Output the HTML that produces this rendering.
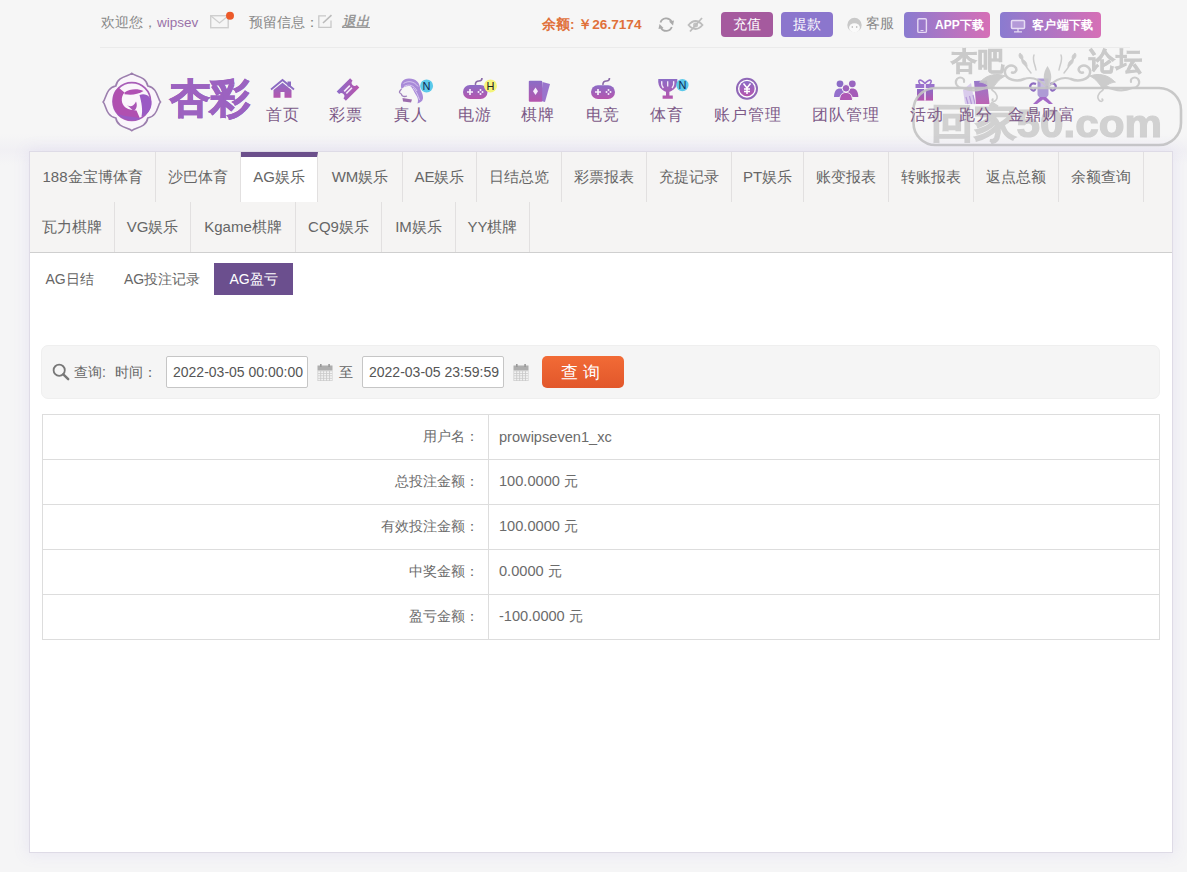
<!DOCTYPE html>
<html><head><meta charset="utf-8">
<style>
*{margin:0;padding:0;box-sizing:border-box}
html,body{width:1187px;height:872px;overflow:hidden}
body{font-family:"Liberation Sans",sans-serif;background:#f5f5f6;position:relative;color:#666}
.abs{position:absolute}
#hdr{position:absolute;left:0;top:0;width:1187px;height:165px;background:linear-gradient(#f6f6f6 0,#f6f6f6 134px,#f1f0f4 150px,#f5f5f6 165px)}
#topline{position:absolute;left:100px;top:47px;width:1030px;height:1px;background:#ebebeb}
.t13{font-size:13.5px;line-height:16px;white-space:nowrap}
.btn{position:absolute;top:12px;height:25px;border-radius:4px;color:#fff;font-size:14px;line-height:25px;text-align:center}
.nav{position:absolute;top:104px;font-size:16px;letter-spacing:1px;line-height:22px;color:#7d5a88;white-space:nowrap}
#box{position:absolute;left:29px;top:151px;width:1144px;height:702px;background:#fff;border:1px solid #dedbe6;box-shadow:0 0 14px 2px rgba(140,115,215,.10)}
#tabs{position:absolute;left:0;top:0;width:1142px;height:101px;background:#f5f4f3;border-bottom:1px solid #cfcfcf}
.tab{position:absolute;height:50px;line-height:50px;font-size:15px;color:#666;border-right:1px solid #e2e0e0;text-align:center;white-space:nowrap}
.sub{position:absolute;top:111px;height:32px;line-height:32px;font-size:14px;color:#666;text-align:center;white-space:nowrap}
.inp{width:142px;height:32px;border:1px solid #c6c6c6;border-radius:2px;background:#fff;font-size:14px;line-height:30px;padding-left:6px;color:#555;white-space:nowrap}
.cal{width:15px;height:17px;background:repeating-linear-gradient(90deg,#ccc 0 2px,#eee 2px 3px);border-top:4px solid #bbb}
#tbl{position:absolute;left:42px;top:414px;width:1118px;border-collapse:collapse;font-size:14px;color:#6b6b6b}
#tbl td{height:45px;border:1px solid #ddd;padding:0}
#tbl td.l{width:446px;text-align:right;padding-right:9px}
#tbl td.r{padding-left:10px}
#tbl .lt{font-size:14.6px}
</style></head><body>
<div id="hdr"></div>
<div id="topline"></div>
<!-- top bar -->
<div class="abs t13" style="left:101px;top:15px;color:#888">欢迎您，<span style="color:#9a72a8">wipsev</span></div>
<div class="abs t13" style="left:249px;top:15px;color:#888">预留信息：</div>
<div class="abs t13" style="left:342px;top:14px;color:#999;font-style:italic;text-decoration:underline;font-weight:bold">退出</div>
<div class="abs" style="left:542px;top:16px;font-size:13.6px;line-height:18px;font-weight:bold;color:#e0703a;white-space:nowrap">余额: ￥26.7174</div>
<div class="btn" style="left:721px;width:52px;background:#a55a9e">充值</div>
<div class="btn" style="left:781px;width:52px;background:#8b76cd">提款</div>
<div class="abs t13" style="left:866px;top:15px;color:#888;font-size:14px">客服</div>
<div class="btn" style="left:904px;width:86px;height:26px;background:linear-gradient(90deg,#8a7bd0,#d66fb6)"></div>
<div class="btn" style="left:1000px;width:101px;height:26px;background:linear-gradient(90deg,#8a7bd0,#d66fb6)"></div>


<!-- header icons svg -->
<svg class="abs" style="left:0;top:0" width="1187" height="150" viewBox="0 0 1187 150">
<defs>
<linearGradient id="pg" x1="0" y1="0" x2="0" y2="1"><stop offset="0" stop-color="#8b6cc6"/><stop offset="1" stop-color="#b655ad"/></linearGradient>
<linearGradient id="pgd" x1="0" y1="0" x2="1" y2="1"><stop offset="0" stop-color="#8c6cc8"/><stop offset="1" stop-color="#b854ac"/></linearGradient>
<linearGradient id="lg" x1="0" y1="0" x2="1" y2="0"><stop offset="0" stop-color="#b550b0"/><stop offset="1" stop-color="#8a66c6"/></linearGradient>
</defs>
<!-- mail -->
<rect x="210.7" y="15.7" width="17.5" height="12" fill="none" stroke="#cfcfcf" stroke-width="1.4"/>
<path d="M211 16 L219.5 23 L228 16" fill="none" stroke="#cfcfcf" stroke-width="1.3"/>
<circle cx="230" cy="15.8" r="4" fill="#ec5a2a"/>
<!-- edit -->
<path d="M326 15.8 H318.8 V27.3 H331 V20.5" fill="none" stroke="#c8c8c8" stroke-width="1.3"/>
<path d="M323 23 L331.5 15.2" stroke="#bbb" stroke-width="1.6"/>
<!-- refresh -->
<path d="M660.5 22.5 A6 6 0 0 1 671.5 21.5" fill="none" stroke="#aaa" stroke-width="1.8"/>
<path d="M671.8 27 A6 6 0 0 1 661 28" fill="none" stroke="#aaa" stroke-width="1.8"/>
<path d="M669 21.5 L674 20.5 L673 25.5 Z" fill="#aaa"/>
<path d="M663.5 28 L658.5 29 L659.5 24 Z" fill="#aaa"/>
<!-- eye slash -->
<path d="M688.5 25 Q695.5 17 702.5 25 Q695.5 33 688.5 25 Z" fill="none" stroke="#bdbdbd" stroke-width="1.8"/>
<circle cx="695.5" cy="25" r="2.5" fill="#c4c4c4"/>
<path d="M690 31.5 L702 18" stroke="#bdbdbd" stroke-width="1.8"/>
<!-- kefu face -->
<circle cx="854.5" cy="25" r="7.2" fill="#c9c9c9"/>
<ellipse cx="854.5" cy="27.8" rx="5.4" ry="4.6" fill="#fafafa"/>
<circle cx="852.3" cy="27" r=".8" fill="#aaa"/><circle cx="856.7" cy="27" r=".8" fill="#aaa"/>
<!-- phone icon in app button -->
<rect x="917.8" y="18.8" width="8.6" height="13.6" rx="1.2" fill="none" stroke="#e6d9f3" stroke-width="1.4"/><rect x="920.5" y="30" width="3" height="1" fill="#e6d9f3"/>
<!-- monitor icon -->
<rect x="1011.5" y="20.5" width="13" height="8" rx="1" fill="#b49ad8" stroke="#e6dcf3" stroke-width="1.5"/>
<path d="M1018 28.5 V31.5 M1014 31.8 H1022" stroke="#e6dcf3" stroke-width="1.3"/>

<!-- logo emblem -->
<path d="M131.8 73.3 C135.0 76.5 146.0 76.0 147.8 86.0 C157.8 87.8 157.3 98.8 160.5 102.0 C157.3 105.2 157.8 116.2 147.8 118.0 C146.0 128.0 135.0 127.5 131.8 130.7 C128.6 127.5 117.6 128.0 115.8 118.0 C105.8 116.2 106.3 105.2 103.1 102.0 C106.3 98.8 105.8 87.8 115.8 86.0 C117.6 76.0 128.6 76.5 131.8 73.3 Z" fill="#faf5fb" stroke="#9c7fae" stroke-width="1.6"/>
<circle cx="131.8" cy="101.5" r="18.8" fill="none" stroke="#a85db8" stroke-width="1.7"/>
<path d="M112.8 101.5 A19 19 0 0 0 140 118.5 L136.5 110.5 C133 110 129 110 125.5 107.5 C121 104 120.5 97 124.5 92.5 L118.5 87.5 A19 19 0 0 0 112.8 101.5 Z" fill="#b050b0"/>
<path d="M127 105 C130.5 107.5 134 106 136 101.5 C137.5 105 137 109 133.5 111 Z" fill="#a955b6"/>
<path d="M124.5 92.5 C130 88.5 138 88.5 143.5 91 C137.5 94.8 131 95.2 124.5 94.2 Z" fill="#b050b4"/>
<path d="M139.5 95 C146 92.5 152 97 151.5 104 C151 110 147.5 114.5 141.5 116.5 C143 110 141.5 102 139.5 95 Z" fill="#9a5ac4"/>
<path d="M117 113.5 C124 117 133 116 141 118.5 C134 121.8 123 120.5 117 113.5 Z" fill="#9a5ac4"/>
<!-- nav icons -->
<!-- home -->
<path d="M271 89.5 L282.5 80 L294 89.5" fill="none" stroke="#8b6ac2" stroke-width="1.8"/>
<rect x="287.5" y="81.5" width="3.5" height="5" fill="#8b6ac2"/>
<path d="M273.5 90 L282.5 82.7 L291.5 90 V97.8 H284.5 V92 H280.5 V97.8 H273.5 Z" fill="url(#pg)"/>
<!-- ticket -->
<g transform="rotate(-45 348 89.5)"><path d="M338.5 83 H357.5 V86.5 A3 3 0 0 0 357.5 92.5 V96 H338.5 V92.5 A3 3 0 0 0 338.5 86.5 Z" fill="url(#pgd)"/>
<rect x="344" y="87.3" width="8" height="1.6" fill="#f4eefa"/><rect x="344" y="90.3" width="8" height="1.6" fill="#f4eefa"/></g>
<!-- woman -->
<path d="M401.5 89 C399.5 83 403 78.5 409 78.5 C416 78.5 419.5 82.5 420 87.5 C420.5 91.5 423.5 94 423 98.5 C422.5 101.5 420 102.5 417.5 103.5 C418.5 100 418 97.5 416 95 C414 92 413 89 411 86.5 C408 85.5 404 86.5 401.5 89 Z" fill="#a88ad8"/>
<path d="M403.5 83.5 C408 80.5 414 81 418 86.5 M404 86.5 C409 83.5 414 85.5 417 91 M413 88 C416 91 418 95 419.5 100" fill="none" stroke="#dccdf2" stroke-width=".9"/>
<path d="M401.5 89 C400.5 90.5 399 91 399.5 92.5 C400 93.5 401 93 401.5 94.5 C402 96.5 404.5 97 407 96" fill="none" stroke="#9f80bc" stroke-width="1.3"/>
<path d="M402.5 98 L412 99.5 L411 102.5 L403 101.5 Z" fill="#9c6cac"/>
<circle cx="426.6" cy="85.9" r="6.5" fill="#5cc9ea"/>
<text x="426.6" y="89.9" font-family="Liberation Sans" font-size="11" fill="#0e2a55" text-anchor="middle">N</text>
<!-- gamepad 1 -->
<path d="M475.5 85 C475 82 477 81 479 81 C481 81 482 80 482 78" fill="none" stroke="#8a6aa8" stroke-width="1.6"/>
<rect x="463" y="85" width="24.5" height="14" rx="7" fill="url(#pg)"/>
<path d="M467 92 H473 M470 89 V95" stroke="#f5eefa" stroke-width="1.7"/>
<circle cx="480.5" cy="90" r="1" fill="#f5eefa"/><circle cx="480.5" cy="94" r="1" fill="#f5eefa"/><circle cx="478.5" cy="92" r="1" fill="#f5eefa"/><circle cx="482.5" cy="92" r="1" fill="#f5eefa"/>
<circle cx="490.5" cy="85.9" r="6.5" fill="#f4f47a"/>
<text x="490.5" y="89.9" font-family="Liberation Sans" font-size="11" fill="#222" text-anchor="middle">H</text>
<!-- cards -->
<path d="M542.5 82 L550 84 L545 102 L541 101 Z" fill="#9a74cc"/>
<rect x="528.8" y="80.8" width="13.4" height="21" rx="1" fill="url(#pg)"/>
<path d="M535.5 87.5 L538 91.3 L535.5 95 L533 91.3 Z" fill="#f6eefb"/>
<!-- gamepad 2 -->
<path d="M603 85 C602.5 82 604.5 81 606.5 81 C608.5 81 609.5 80 609.5 78" fill="none" stroke="#8a6aa8" stroke-width="1.6"/>
<rect x="591" y="85.2" width="24" height="13.8" rx="6.9" fill="url(#pg)"/>
<path d="M595 92 H601 M598 89 V95" stroke="#f5eefa" stroke-width="1.7"/>
<circle cx="608.5" cy="90" r="1" fill="#f5eefa"/><circle cx="608.5" cy="94" r="1" fill="#f5eefa"/><circle cx="606.5" cy="92" r="1" fill="#f5eefa"/><circle cx="610.5" cy="92" r="1" fill="#f5eefa"/>
<!-- trophy -->
<path d="M658.3 79 H677.3 C677.8 83 676.8 87 673.6 89.6 C672 90.9 670.6 91.5 669.4 91.8 V95.6 H672.8 V98.8 H662.6 V95.6 H666 V91.8 C664.8 91.5 663.4 90.9 661.9 89.6 C658.8 87 657.8 83 658.3 79 Z" fill="url(#pg)"/>
<path d="M661.8 81.2 C661.3 83.8 661.8 86 663.4 88 M667.7 81.2 V86.5 M673.6 81.2 C674.1 83.8 673.6 86 672 88" fill="none" stroke="#f3ecf9" stroke-width="1.3"/>
<circle cx="682.4" cy="85.1" r="6.2" fill="#5cc9ea"/>
<text x="682.4" y="89.1" font-family="Liberation Sans" font-size="11" fill="#0e2a55" text-anchor="middle">N</text>
<!-- coin -->
<circle cx="747" cy="88.7" r="10" fill="#fff" stroke="#9068b8" stroke-width="2"/>
<circle cx="747" cy="88.7" r="7.6" fill="url(#pg)"/>
<path d="M743.5 83.5 L747 88 L750.5 83.5 M747 88 V94 M744 89 H750 M744 91.5 H750" fill="none" stroke="#fff" stroke-width="1.5"/>
<!-- people -->
<circle cx="840" cy="83.8" r="3.4" fill="#8c6cc6"/><circle cx="852.3" cy="83.8" r="3.4" fill="#9a66c0"/>
<path d="M834 97 C834 91 836.5 88.5 840 88.5 C843.5 88.5 846 91 846 97 Z" fill="#9470cc"/>
<path d="M846.3 97 C846.3 91 848.8 88.5 852.3 88.5 C855.8 88.5 858.3 91 858.3 97 Z" fill="#a45cb8"/>
<circle cx="846" cy="88.3" r="3.8" fill="#9e62bc" stroke="#f7f7f7" stroke-width="1"/>
<path d="M839.5 100.5 C839.5 95 842 92.5 846 92.5 C850 92.5 852.5 95 852.5 100.5 Z" fill="#ae58b4" stroke="#f7f7f7" stroke-width="1"/>
<!-- gift -->
<path d="M920 84 C917 80 920 78 925 83.5 C930 78 933 80 930 84" fill="none" stroke="#9a72cc" stroke-width="1.6"/>
<rect x="915.5" y="84" width="19" height="4" fill="#9a72cc"/>
<rect x="917" y="89" width="16" height="11.6" fill="url(#pg)"/>
<rect x="924.2" y="84" width="1.6" height="16.6" fill="#f5eef9"/>
<!-- paofen -->
<path d="M963 90 L971 83 L975 104 L965 104 Z" fill="#d2c0ea" opacity=".8"/>
<path d="M974 81 L987 80.5 L989.5 104 L976 104 Z" fill="url(#pg)" opacity=".9"/>
<path d="M966 97 L968 104 M969.5 96 L971.5 104 M973 95 L975 104" stroke="#b59ad8" stroke-width="1.2"/>
<!-- ding -->
<path d="M1037.5 78.5 H1048.5 V94 C1048.5 96.5 1046 98 1043 98 C1040 98 1037.5 96.5 1037.5 94 Z" fill="#a591d2" opacity=".9"/>
<rect x="1040.5" y="81" width="5" height="8" fill="#c9bce6"/>
<path d="M1036 84 C1031 82 1029 86 1031 89 C1033 92 1036 90 1035 88 M1050 84 C1055 82 1057 86 1055 89 C1053 92 1050 90 1051 88" fill="none" stroke="#8e6cc0" stroke-width="2.2"/>
<path d="M1033 104 L1040 97 H1046 L1053 104 H1049 L1043 99.5 L1037 104 Z" fill="#a46ac6"/>
</svg>

<div class="abs" style="left:935px;top:17px;font-size:12px;line-height:16px;color:#fff;font-weight:bold;white-space:nowrap">APP下载</div>
<div class="abs" style="left:1032px;top:17px;font-size:12px;line-height:16px;color:#fff;font-weight:bold;white-space:nowrap;letter-spacing:.3px">客户端下载</div>
<!-- logo -->
<div class="abs" style="left:170px;top:73px;font-size:40px;line-height:50px;font-weight:900;white-space:nowrap;background:linear-gradient(90deg,#a55cbc,#8e6ac8);-webkit-background-clip:text;background-clip:text;color:transparent;-webkit-text-stroke:1.1px #9c62c0">杏彩</div>

<!-- watermark -->
<svg class="abs" style="left:900px;top:40px" width="287" height="112" viewBox="900 40 287 112">
<defs><g id="flh" fill="none" stroke="#c8c8c8" stroke-linecap="round">
<path d="M1024 79 C1017 82 1006 80 1005 73 C1004 67 1010 64 1014.5 66.5 C1018 69 1016 73.5 1012 72.5" stroke-width="2.5"/>
<path d="M1024 79 C1032 76 1039 79 1046 86" stroke-width="2"/>
<path d="M1031 73 C1026 67 1023 62 1021 56 M1036 70 C1035 64 1032 60 1034 55" stroke-width="1.5"/>
<path d="M1022 60 C1019 58 1018 55 1020 53 C1023 55 1024 58 1022 60 Z M1027 66 C1023 65 1021 62 1022 59 C1026 61 1027 63 1027 66 Z" fill="#c8c8c8" stroke-width=".8"/>
<path d="M963 88 C957 88 954 83 957 79 C960 76 965 78 964 82" stroke-width="2.1"/>
<path d="M963 88 C972 92 982 90 990 86" stroke-width="2.3"/>
<path d="M980 82 C987 74 998 73 1005 76 C999 79 995 84 992 90 C990 86 986 83 980 82 Z" fill="#c8c8c8" stroke-width="1"/>
<path d="M992 90 C997 93 999 98 995 101 C993 102 991 100 993 99" stroke-width="1.6"/>
</g></defs>
<g opacity=".9">
<g fill="#c6c6c6" stroke="#c6c6c6" stroke-width=".8" font-family="Liberation Sans" font-weight="bold" font-size="26">
<text x="951" y="69.5" textLength="53">杏吧</text>
<text x="1089" y="69.5" textLength="53">论坛</text>
</g>
<use href="#flh"/>
<use href="#flh" transform="translate(2095 0) scale(-1 1)"/>
<path d="M1047.5 87 C1042.5 81 1042.5 73 1047.5 66 C1052.5 73 1052.5 81 1047.5 87 Z" fill="#c8c8c8"/>
<rect x="913.5" y="88" width="267.5" height="57" rx="22" fill="none" stroke="#c4c4c4" stroke-width="2.6"/>
<text x="931" y="137" font-family="Liberation Sans" font-weight="bold" font-size="39.5" fill="#cdcdcd" stroke="#cdcdcd" stroke-width="1.2" textLength="231" lengthAdjust="spacingAndGlyphs">回家50.com</text>
</g>
</svg>
<!-- nav -->
<div class="nav" style="left:266px">首页</div>
<div class="nav" style="left:329px">彩票</div>
<div class="nav" style="left:394px">真人</div>
<div class="nav" style="left:458px">电游</div>
<div class="nav" style="left:521px">棋牌</div>
<div class="nav" style="left:586px">电竞</div>
<div class="nav" style="left:650px">体育</div>
<div class="nav" style="left:714px">账户管理</div>
<div class="nav" style="left:812px">团队管理</div>
<div class="nav" style="left:910px">活动</div>
<div class="nav" style="left:959px">跑分</div>
<div class="nav" style="left:1008px">金鼎财富</div>

<div id="box">
 <div id="tabs">
  <div class="tab" style="left:0;top:0;width:126px">188金宝博体育</div>
  <div class="tab" style="left:126px;top:0;width:85px">沙巴体育</div>
  <div class="tab" style="left:211px;top:0;width:77px;background:#fff;border-top:5px solid #6b4f8b;line-height:40px">AG娱乐</div>
  <div class="tab" style="left:288px;top:0;width:85px">WM娱乐</div>
  <div class="tab" style="left:373px;top:0;width:74px">AE娱乐</div>
  <div class="tab" style="left:447px;top:0;width:85px">日结总览</div>
  <div class="tab" style="left:532px;top:0;width:85px">彩票报表</div>
  <div class="tab" style="left:617px;top:0;width:85px">充提记录</div>
  <div class="tab" style="left:702px;top:0;width:72px">PT娱乐</div>
  <div class="tab" style="left:774px;top:0;width:85px">账变报表</div>
  <div class="tab" style="left:859px;top:0;width:85px">转账报表</div>
  <div class="tab" style="left:944px;top:0;width:85px">返点总额</div>
  <div class="tab" style="left:1029px;top:0;width:85px">余额查询</div>
  <div class="tab" style="left:0;top:50px;width:85px">瓦力棋牌</div>
  <div class="tab" style="left:85px;top:50px;width:76px">VG娱乐</div>
  <div class="tab" style="left:161px;top:50px;width:105px">Kgame棋牌</div>
  <div class="tab" style="left:266px;top:50px;width:86px">CQ9娱乐</div>
  <div class="tab" style="left:352px;top:50px;width:74px">IM娱乐</div>
  <div class="tab" style="left:426px;top:50px;width:74px">YY棋牌</div>
 </div>
 <div class="sub" style="left:0;width:79px">AG日结</div>
 <div class="sub" style="left:79px;width:106px">AG投注记录</div>
 <div class="sub" style="left:184px;width:79px;background:#6b4f8e;color:#fff">AG盈亏</div>
</div>




<!-- search -->
<div class="abs" style="left:41px;top:345px;width:1119px;height:54px;background:#f5f5f5;border:1px solid #efefef;border-radius:7px"></div>
<svg class="abs" style="left:52px;top:363px" width="18" height="18" viewBox="0 0 18 18"><circle cx="7.2" cy="7.2" r="5.6" fill="none" stroke="#777" stroke-width="1.8"/><path d="M11.3 11.3 L16.2 16.2" stroke="#777" stroke-width="2.4" stroke-linecap="round"/></svg>
<div class="abs" style="left:74px;top:362px;font-size:14px;line-height:20px;color:#666;white-space:nowrap">查询:</div>
<div class="abs" style="left:115px;top:362px;font-size:14px;line-height:20px;color:#666;white-space:nowrap">时间：</div>
<div class="abs inp" style="left:166px;top:356px">2022-03-05 00:00:00</div>
<div class="abs inp" style="left:362px;top:356px">2022-03-05 23:59:59</div>
<div class="abs" style="left:339px;top:362px;font-size:14px;line-height:20px;color:#666">至</div>
<svg class="abs" style="left:317px;top:363px" width="16" height="19" viewBox="0 0 16 19"><rect x="0.5" y="2.5" width="15" height="5" fill="#aeaeae"/><rect x="3" y="1" width="1.6" height="3" fill="#999"/><rect x="11.3" y="1" width="1.6" height="3" fill="#999"/><rect x="0.5" y="7.5" width="15" height="10.5" fill="#c9c9c9"/><rect x="1.20" y="8.30" width="2.1" height="1.7" fill="#f2f2f2"/><rect x="4.15" y="8.30" width="2.1" height="1.7" fill="#f2f2f2"/><rect x="7.10" y="8.30" width="2.1" height="1.7" fill="#f2f2f2"/><rect x="10.05" y="8.30" width="2.1" height="1.7" fill="#f2f2f2"/><rect x="13.00" y="8.30" width="2.1" height="1.7" fill="#f2f2f2"/><rect x="1.20" y="10.75" width="2.1" height="1.7" fill="#f2f2f2"/><rect x="4.15" y="10.75" width="2.1" height="1.7" fill="#f2f2f2"/><rect x="7.10" y="10.75" width="2.1" height="1.7" fill="#f2f2f2"/><rect x="10.05" y="10.75" width="2.1" height="1.7" fill="#f2f2f2"/><rect x="13.00" y="10.75" width="2.1" height="1.7" fill="#f2f2f2"/><rect x="1.20" y="13.20" width="2.1" height="1.7" fill="#f2f2f2"/><rect x="4.15" y="13.20" width="2.1" height="1.7" fill="#f2f2f2"/><rect x="7.10" y="13.20" width="2.1" height="1.7" fill="#f2f2f2"/><rect x="10.05" y="13.20" width="2.1" height="1.7" fill="#f2f2f2"/><rect x="13.00" y="13.20" width="2.1" height="1.7" fill="#f2f2f2"/><rect x="1.20" y="15.65" width="2.1" height="1.7" fill="#f2f2f2"/><rect x="4.15" y="15.65" width="2.1" height="1.7" fill="#f2f2f2"/><rect x="7.10" y="15.65" width="2.1" height="1.7" fill="#f2f2f2"/><rect x="10.05" y="15.65" width="2.1" height="1.7" fill="#f2f2f2"/><rect x="13.00" y="15.65" width="2.1" height="1.7" fill="#f2f2f2"/></svg>
<svg class="abs" style="left:513px;top:363px" width="16" height="19" viewBox="0 0 16 19"><rect x="0.5" y="2.5" width="15" height="5" fill="#aeaeae"/><rect x="3" y="1" width="1.6" height="3" fill="#999"/><rect x="11.3" y="1" width="1.6" height="3" fill="#999"/><rect x="0.5" y="7.5" width="15" height="10.5" fill="#c9c9c9"/><rect x="1.20" y="8.30" width="2.1" height="1.7" fill="#f2f2f2"/><rect x="4.15" y="8.30" width="2.1" height="1.7" fill="#f2f2f2"/><rect x="7.10" y="8.30" width="2.1" height="1.7" fill="#f2f2f2"/><rect x="10.05" y="8.30" width="2.1" height="1.7" fill="#f2f2f2"/><rect x="13.00" y="8.30" width="2.1" height="1.7" fill="#f2f2f2"/><rect x="1.20" y="10.75" width="2.1" height="1.7" fill="#f2f2f2"/><rect x="4.15" y="10.75" width="2.1" height="1.7" fill="#f2f2f2"/><rect x="7.10" y="10.75" width="2.1" height="1.7" fill="#f2f2f2"/><rect x="10.05" y="10.75" width="2.1" height="1.7" fill="#f2f2f2"/><rect x="13.00" y="10.75" width="2.1" height="1.7" fill="#f2f2f2"/><rect x="1.20" y="13.20" width="2.1" height="1.7" fill="#f2f2f2"/><rect x="4.15" y="13.20" width="2.1" height="1.7" fill="#f2f2f2"/><rect x="7.10" y="13.20" width="2.1" height="1.7" fill="#f2f2f2"/><rect x="10.05" y="13.20" width="2.1" height="1.7" fill="#f2f2f2"/><rect x="13.00" y="13.20" width="2.1" height="1.7" fill="#f2f2f2"/><rect x="1.20" y="15.65" width="2.1" height="1.7" fill="#f2f2f2"/><rect x="4.15" y="15.65" width="2.1" height="1.7" fill="#f2f2f2"/><rect x="7.10" y="15.65" width="2.1" height="1.7" fill="#f2f2f2"/><rect x="10.05" y="15.65" width="2.1" height="1.7" fill="#f2f2f2"/><rect x="13.00" y="15.65" width="2.1" height="1.7" fill="#f2f2f2"/></svg>
<div class="abs" style="left:542px;top:356px;width:82px;height:32px;border-radius:5px;background:linear-gradient(#f26b36,#e2572b);color:#fff;font-size:16.5px;line-height:32px;text-align:center;letter-spacing:5px">查询</div>

<!-- table -->
<table id="tbl">
<tr><td class="l">用户名：</td><td class="r"><span class="lt">prowipseven1_xc</span></td></tr>
<tr><td class="l">总投注金额：</td><td class="r"><span class="lt">100.0000</span> 元</td></tr>
<tr><td class="l">有效投注金额：</td><td class="r"><span class="lt">100.0000</span> 元</td></tr>
<tr><td class="l">中奖金额：</td><td class="r"><span class="lt">0.0000</span> 元</td></tr>
<tr><td class="l">盈亏金额：</td><td class="r"><span class="lt">-100.0000</span> 元</td></tr>
</table>
</body></html>
